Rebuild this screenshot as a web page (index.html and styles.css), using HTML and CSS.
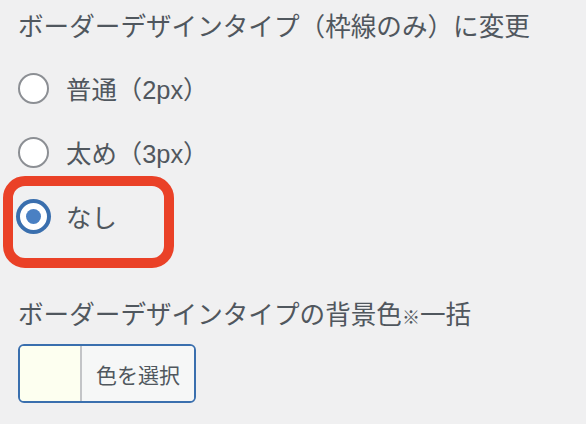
FILE: index.html
```html
<!DOCTYPE html>
<html lang="ja">
<head>
<meta charset="utf-8">
<link rel="stylesheet" href="styles.css">
</head>
<body>
<div class="panel">
  <h3 class="heading">ボーダーデザインタイプ（枠線のみ）に変更</h3>
  <div class="options">
    <label class="option"><input type="radio" name="border" class="radio"><span>普通（2px）</span></label>
    <label class="option"><input type="radio" name="border" class="radio"><span>太め（3px）</span></label>
    <label class="option option-selected"><input type="radio" name="border" class="radio" checked><span>なし</span><span class="highlight"></span></label>
  </div>
  <h3 class="heading heading-second">ボーダーデザインタイプの背景色<span class="mark">※</span>一括</h3>
  <div class="color-picker">
    <span class="swatch"></span>
    <span class="pick-label">色を選択</span>
  </div>
</div>
</body>
</html>
```

FILE: styles.css
```css
html, body {
  margin: 0;
  padding: 0;
  background: #f0f0f1;
}
body {
  font-family: "Liberation Sans", "Noto Sans CJK JP", sans-serif;
  color: #50575e;
}
.panel {
  padding: 9px 0 0 18px;
}
.heading {
  margin: 0;
  font-size: 25.6px;
  font-weight: 400;
  line-height: 36px;
  color: #50575e;
}
.mark {
  font-size: 18px;
  font-weight: 700;
}
.options {
  display: flex;
  flex-direction: column;
  margin-top: 11px;
}
.option {
  position: relative;
  display: flex;
  align-items: center;
  gap: 17px;
  height: 64px;
  font-size: 25.4px;
}
.radio {
  appearance: none;
  -webkit-appearance: none;
  margin: 0;
  width: 31px;
  height: 31px;
  border: 2px solid #8c8f94;
  border-radius: 50%;
  background: #fff;
  box-sizing: border-box;
  flex: none;
  display: grid;
  place-items: center;
}
.radio:checked {
  border-color: #3a6fae;
  box-shadow: 0 0 0 2px #3a6fae;
}
.radio:checked::before {
  content: "";
  width: 15px;
  height: 15px;
  border-radius: 50%;
  background: #4a80c3;
}
.highlight {
  position: absolute;
  left: -15px;
  top: -8px;
  width: 171px;
  height: 92px;
  box-sizing: border-box;
  border: 10px solid #ea4127;
  border-radius: 22px;
  pointer-events: none;
}
.heading-second {
  margin-top: 49px;
}
.color-picker {
  display: flex;
  margin-top: 8px;
  width: 178px;
  height: 59px;
  box-sizing: border-box;
  border: 2px solid #3a6fae;
  border-radius: 6px;
  overflow: hidden;
}
.swatch {
  width: 60px;
  background: #fdfff0;
  border-right: 2px solid #c3c4c7;
}
.pick-label {
  flex: 1;
  display: flex;
  align-items: center;
  justify-content: center;
  background: #f6f7f7;
  font-size: 21px;
  color: #50575e;
}
```
